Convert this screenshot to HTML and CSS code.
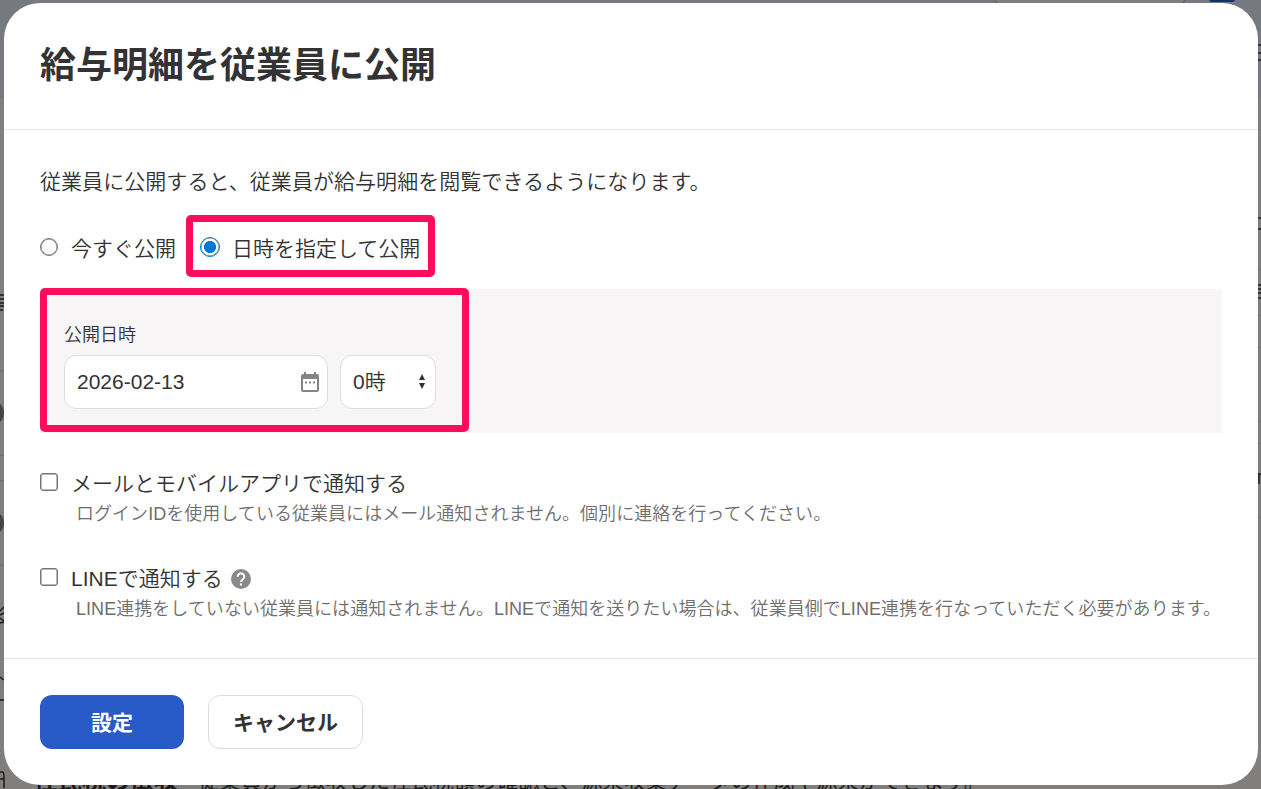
FILE: index.html
```
<!DOCTYPE html>
<html lang="ja">
<head>
  <meta charset="UTF-8" />
  <meta name="viewport" content="width=device-width, initial-scale=1.0"/>
  <title>給与明細を従業員に公開</title>
  <link rel="stylesheet" href="styles.css">
</head>
<body>

  <!-- Page behind the dialog -->
  <div class="page">
    <div class="page-header"></div>
    <div class="page-search"></div>
    <div class="page-button"></div>
    <svg class="page-edges" width="1261" height="789" viewBox="0 0 1261 789">
      <path class="rule" d="M0 370.5h4M0 455.5h4M0 480.5h4M0 565.5h4M1258 269.5h3M1258 315.5h3M1258 347.5h3M1258 421.5h3M1258 443.5h3M1258 517.5h3"/>
      <circle cx="-8" cy="413" r="12"/>
      <circle cx="-8" cy="523" r="12"/>
      <path class="ink" d="M0 295h4M0 299h4M0 303h4M0 306h4M0 310h3M1258 45h3M1258 53h3M1258 60h3M1258 285h3M1258 289h3M1258 293h3M1258 298h3M1258 218h3M1258 229h3M1258 474h3M1259 474v10M0 677l4 3M0 700h4M0 772h2q2 0 2 4v12M0 779h4M0 611l4-4M0 615l4-2M0 618l4 3M0 623l4-1"/>
    </svg>
    <div class="page-row">
      <strong>住民税の徴収</strong>
      <span>従業員から徴収した住民税額の確認と、源泉収集データの作成や源泉ができます。</span>
    </div>
  </div>

  <div class="dialog">
    <div class="dialog-header">
      <h1>給与明細を従業員に公開</h1>
    </div>

    <div class="dialog-body">
      <p class="lead">従業員に公開すると、従業員が給与明細を閲覧できるようになります。</p>

      <div class="radio-group">
        <label class="option"><input type="radio" name="timing" value="now"> 今すぐ公開</label>
        <label class="option marked"><input type="radio" name="timing" value="later" checked> 日時を指定して公開<span class="marker"></span></label>
      </div>

      <div class="schedule">
        <div class="schedule-label">公開日時</div>
        <div class="fields">
          <div class="field date-field">
            <span>2026-02-13</span>
            <svg width="18" height="20" viewBox="0 0 18 20">
              <path fill="#858585" fill-rule="evenodd" d="M3 0h2v2h8V0h2v2h1a2 2 0 0 1 2 2v14a2 2 0 0 1-2 2H2a2 2 0 0 1-2-2V4a2 2 0 0 1 2-2h1zM2 7v11h14V7zM4 9.500h2v2H4zM8 9.500h2v2H8zM12 9.500h2v2h-2z"/>
            </svg>
          </div>
          <div class="field hour-field">
            <span>0時</span>
            <svg width="6" height="15" viewBox="0 0 6 15">
              <path fill="#333" d="M3 0l3 6H0zM0 9h6l-3 6z"/>
            </svg>
          </div>
        </div>
        <span class="marker"></span>
      </div>

      <div class="notice">
        <label class="option"><input type="checkbox"> メールとモバイルアプリで通知する</label>
        <p>ログインIDを使用している従業員にはメール通知されません。個別に連絡を行ってください。</p>
      </div>

      <div class="notice">
        <label class="option"><input type="checkbox"> LINEで通知する
          <svg class="help" width="20" height="20" viewBox="0 0 20 20">
            <circle cx="10" cy="10" r="10" fill="#8c8989"/>
            <path d="M6.700 7.700a3.300 3.300 0 1 1 5.300 2.600c-1.300 1-2 1.400-2 2.700" fill="none" stroke="#fff" stroke-width="2"/>
            <path d="M9 14.500h2v2H9z" fill="#fff"/>
          </svg>
        </label>
        <p>LINE連携をしていない従業員には通知されません。LINEで通知を送りたい場合は、従業員側でLINE連携を行なっていただく必要があります。</p>
      </div>
    </div>

    <div class="dialog-footer">
      <button class="btn btn-primary">設定</button>
      <button class="btn">キャンセル</button>
    </div>
  </div>

</body>
</html>
```
FILE: styles.css
```
* {
  box-sizing: border-box;
}

body {
  margin: 0;
  height: 789px;
  overflow: hidden;
  position: relative;
  padding: 3px 3px 4px 4px;
  background: #807f7e;
  color: #333;
  font-family: "Liberation Sans", "Noto Sans CJK JP", sans-serif;
  font-size: 21px;
}

h1, p {
  margin: 0;
}

/* Page behind the dialog */
.page {
  position: absolute;
  inset: 0;
  overflow: hidden;
}

.page-header {
  height: 99px;
  background: #777980;
}

.page-search {
  position: absolute;
  top: -34px;
  left: 994px;
  width: 192px;
  height: 42px;
  border: 1px solid #555;
  border-radius: 12px;
  background: #807f7e;
}

.page-button {
  position: absolute;
  top: -20px;
  left: 1209px;
  width: 26px;
  height: 22px;
  border-radius: 3px;
  background: #142e70;
}

.page-edges {
  position: absolute;
  top: 0;
  left: 0;
}

.page-edges circle {
  fill: #464442;
}

.page-edges path {
  fill: none;
}

.page-edges .rule {
  stroke: #6d6c6b;
}

.page-edges .ink {
  stroke: #1b1b1b;
  stroke-width: 1.5;
}

.page-row {
  position: absolute;
  top: 764px;
  left: 34px;
  display: flex;
  gap: 20px;
  line-height: 34px;
  white-space: nowrap;
  color: #1a1a1a;
  letter-spacing: 0.35px;
}

.page-row strong {
  width: 144px;
  font-size: 24px;
  letter-spacing: 0;
}

/* Dialog */
.dialog {
  position: relative;
  height: 782px;
  display: flex;
  flex-direction: column;
  border-radius: 36px;
  background: #fff;
}

.dialog-header {
  height: 127px;
  padding: 38px 36px 0;
  border-bottom: 1px solid #e5e5e5;
}

.dialog-header h1 {
  font-size: 36px;
  line-height: 50px;
}

.dialog-body {
  flex: 1;
  padding: 37px 36px 0;
  font-weight: 350;
}

.lead {
  line-height: 30px;
  letter-spacing: 0.06px;
}

.radio-group {
  display: flex;
  gap: 24px;
  margin-top: 36px;
}

.option {
  display: flex;
  align-items: center;
  height: 32px;
  line-height: 32px;
}

.option input {
  appearance: none;
  flex: none;
  width: 18px;
  height: 18px;
  margin: 0 13px 4px 0;
  border: 1.5px solid #767676;
  border-radius: 3px;
  background: #fff;
  box-shadow: inset 0 0 0 0.5px #767676;
}

.option input[type="radio"] {
  border-radius: 50%;
}

.option input[type="radio"]:checked {
  width: 20px;
  height: 20px;
  margin-right: 12px;
  border: 1px solid #0078d7;
  background: radial-gradient(circle, #0078d7 5.7px, #fff 6.3px);
}

.marked {
  position: relative;
}

/* Highlight frame drawn over the marked controls */
.marker {
  position: absolute;
  border: 7px solid #ff0d5c;
  border-radius: 5px;
}

.marked .marker {
  inset: -18px -15px -12px -14px;
}

.schedule {
  position: relative;
  height: 144px;
  margin-top: 24px;
  padding: 33px 24px 0;
  background: #f7f5f6;
}

.schedule .marker {
  top: -1px;
  left: 0;
  width: 429px;
  height: 144px;
}

.schedule-label {
  font-size: 18px;
  line-height: 26px;
}

.fields {
  display: flex;
  gap: 12px;
  margin-top: 7px;
}

.field {
  display: flex;
  align-items: center;
  justify-content: space-between;
  height: 54px;
  padding: 0 10px 0 12px;
  border: 1px solid #ddd;
  border-radius: 12px;
  background: #fff;
}

.date-field {
  width: 264px;
  padding-right: 8px;
}

.hour-field {
  width: 96px;
}

.hour-field span {
  margin-bottom: 4px;
}

.hour-field svg {
  margin-bottom: 1px;
}

.notice {
  margin-top: 35px;
}

.notice + .notice {
  margin-top: 36px;
}

.notice p {
  padding: 1px 0 0 36px;
  color: #706d6c;
  font-size: 18px;
  line-height: 26px;
  letter-spacing: 0.04px;
  white-space: nowrap;
}

.help {
  margin-left: 8px;
}

.dialog-footer {
  display: flex;
  gap: 24px;
  height: 127px;
  padding: 36px;
  border-top: 1px solid #e5e5e5;
}

.btn {
  width: 155px;
  height: 54px;
  padding: 0 0 3px;
  border: 1px solid #ddd;
  border-radius: 12px;
  background: #fff;
  color: #333;
  font-family: inherit;
  font-size: 21px;
  font-weight: bold;
}

.btn-primary {
  width: 144px;
  border: none;
  background: #285ac8;
  color: #fff;
}
```
